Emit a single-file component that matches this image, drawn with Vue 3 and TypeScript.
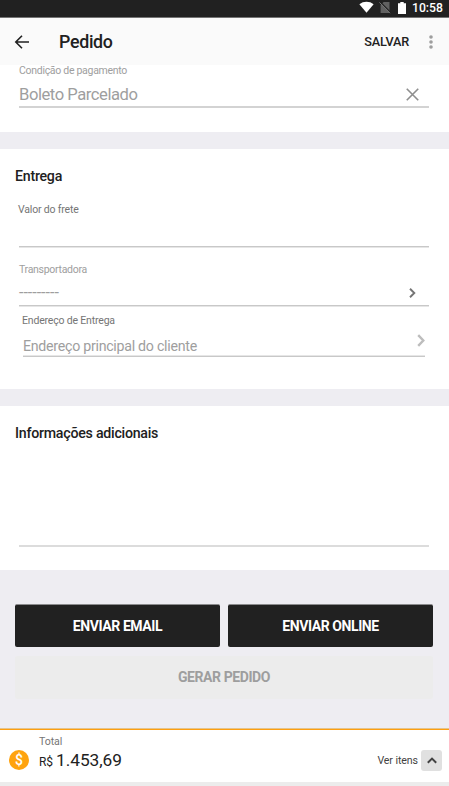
<script setup lang="ts">
import { ref } from 'vue'

interface Order {
  payment: string
  freight: string
  carrier: string
  address: string
  notes: string
  total: string
}

const order = ref<Order>({
  payment: 'Boleto Parcelado',
  freight: '',
  carrier: '---------',
  address: 'Endereço principal do cliente',
  notes: '',
  total: '1.453,69',
})

const sendActions: string[] = ['Enviar email', 'Enviar online']
</script>

<template>
  <main class="screen">
    <div class="status">
      <svg class="wifi" viewBox="0 0 16 12"><path d="M0.4 3.1C4.8-.4 11.2-.4 15.6 3.1L8 12Z" fill="#fff" /></svg>
      <svg class="sim" viewBox="0 0 12 13">
        <path d="M4.6 1H10.5V12H1.6V4Z" fill="#616161" />
        <path d="M1.2 .8L11.8 11.6" stroke="#212121" stroke-width="1.2" />
        <path d="M.4 1.4L11 12.2" stroke="#757575" stroke-width="1" />
      </svg>
      <svg class="battery" viewBox="0 0 8 12"><path d="M2.3 0H5.7V1.2H8V12H0V1.2H2.3Z" fill="#fff" /></svg>
      <span class="clock">10:58</span>
    </div>

    <header class="bar">
      <svg class="back" viewBox="0 0 16 16"><path d="M15 8H2M8 1.8L1.8 8L8 14.2" fill="none" stroke="#212121" stroke-width="1.6" /></svg>
      <h1>Pedido</h1>
      <span class="save">SALVAR</span>
      <svg class="more" viewBox="0 0 4 14"><circle cx="2" cy="2" r="1.8" /><circle cx="2" cy="7" r="1.8" /><circle cx="2" cy="12" r="1.8" /></svg>
    </header>

    <section class="card payment">
      <div class="field">
        <label class="light">Condição de pagamento</label>
        <div class="value">
          <span>{{ order.payment }}</span>
          <svg class="close" viewBox="0 0 12 12"><path d="M.7.7L11.3 11.3M11.3.7L.7 11.3" fill="none" stroke="#8e8e8e" stroke-width="1.5" /></svg>
        </div>
      </div>
    </section>

    <section class="card delivery">
      <h2>Entrega</h2>
      <div class="field freight">
        <label>Valor do frete</label>
        <div class="value">{{ order.freight }}</div>
      </div>
      <div class="field carrier">
        <label class="light">Transportadora</label>
        <div class="value">
          <span>{{ order.carrier }}</span>
          <svg class="chevron" viewBox="0 0 7 10"><path d="M1 .8L5.3 5L1 9.2" fill="none" stroke="#757575" stroke-width="1.9" /></svg>
        </div>
      </div>
      <div class="field address">
        <label>Endereço de Entrega</label>
        <div class="value">
          <span>{{ order.address }}</span>
          <svg class="chevron-lg" viewBox="0 0 8 13"><path d="M1.2 1.1L6.3 6.5L1.2 11.9" fill="none" stroke="#bdbdbd" stroke-width="2.4" /></svg>
        </div>
      </div>
    </section>

    <section class="card extra">
      <h2>Informações adicionais</h2>
      <div class="notes">{{ order.notes }}</div>
    </section>

    <div class="actions">
      <button v-for="action in sendActions" :key="action" type="button">{{ action }}</button>
      <button class="wide" type="button" disabled>Gerar pedido</button>
    </div>

    <footer class="total">
      <div class="coin">$</div>
      <div class="sum">
        <span class="caption">Total</span>
        <div class="amount"><small>R$</small><span>{{ order.total }}</span></div>
      </div>
      <div class="items">
        <span>Ver itens</span>
        <div class="toggle">
          <svg viewBox="0 0 10 7"><path d="M.8 5.8L5 1.6L9.2 5.8" fill="none" stroke="#424242" stroke-width="2" /></svg>
        </div>
      </div>
    </footer>
  </main>
</template>

<style>
body {
  background: #ececec;
}
</style>

<style scoped>
.screen {
  box-sizing: border-box;
  height: 786px;
  display: flex;
  flex-direction: column;
  overflow: hidden;
  background: #eeedf2;
  border-bottom: 4px solid #ececec;
  color: #212121;
  font-family: Roboto, sans-serif;
}
svg {
  display: block;
  flex: none;
}
h1,
h2 {
  margin: 0;
  font-weight: 500;
}
.status {
  box-sizing: border-box;
  height: 18px;
  flex: none;
  display: flex;
  align-items: flex-start;
  padding: 1px 6px 0 359px;
  background: #212121;
  border-bottom: 1px solid #747474;
}
.wifi {
  width: 15px;
  height: 12px;
}
.sim {
  width: 12px;
  height: 13px;
  margin-left: 5px;
}
.battery {
  width: 8px;
  height: 12px;
  margin: 1px 0 0 7px;
}
.clock {
  margin-left: 6px;
  color: #fff;
  font-size: 12.2px;
  font-weight: 500;
  line-height: 14px;
}
.bar {
  height: 47px;
  flex: none;
  display: flex;
  align-items: center;
  padding: 0 16px 0 14px;
  background: #fafafa;
}
.back {
  width: 16px;
  height: 16px;
}
h1 {
  margin-left: 29px;
  font-size: 17.8px;
  letter-spacing: -0.3px;
  line-height: 24px;
}
.save {
  margin-left: auto;
  font-size: 12.7px;
  font-weight: 500;
  letter-spacing: -0.2px;
}
.more {
  width: 4px;
  height: 14px;
  margin-left: 20px;
  fill: #9e9e9e;
}
.card {
  box-sizing: border-box;
  flex: none;
  background: #fff;
}
.payment {
  height: 67px;
  padding: 1px 20px 0 19px;
}
.delivery {
  height: 240px;
  margin-top: 17px;
  padding: 17px 20px 0 19px;
}
.extra {
  height: 164px;
  margin-top: 17px;
  padding: 17px 20px 0 19px;
}
h2 {
  margin-left: -4px;
  font-size: 14.2px;
  letter-spacing: -0.25px;
  line-height: 20px;
}
label {
  display: block;
  margin-left: -1px;
  color: #757575;
  font-size: 10.5px;
  letter-spacing: -0.18px;
  line-height: 10px;
}
label.light {
  margin-left: 0;
  color: #9e9e9e;
  letter-spacing: -0.29px;
}
.value {
  box-sizing: border-box;
  display: flex;
  align-items: center;
  justify-content: space-between;
  border-bottom: 1px solid #c8c8c8;
  box-shadow: 0 1px #e6e6e6;
  color: #9e9e9e;
}
.payment .value {
  height: 32px;
  padding: 7px 10px 0 0;
  border-bottom: 2px solid #d3d3d3;
  box-shadow: none;
  font-size: 16.6px;
  letter-spacing: -0.45px;
  line-height: 24px;
}
.close {
  width: 13px;
  height: 13px;
  margin-top: -1px;
}
.freight {
  padding-top: 19px;
}
.freight .value {
  height: 32px;
}
.carrier {
  padding-top: 18px;
}
.carrier .value {
  height: 31px;
  padding: 6px 13px 0 0;
  font-size: 16px;
  line-height: 20px;
}
.chevron {
  width: 7px;
  height: 10px;
}
.address {
  padding: 10px 4px 0;
}
.address .value {
  height: 31px;
  padding-top: 9px;
  box-shadow: inset 0 -1px #e6e6e6;
  font-size: 14.2px;
  letter-spacing: -0.27px;
  line-height: 20px;
}
.chevron-lg {
  width: 8px;
  height: 13px;
  margin-top: -11px;
}
.notes {
  height: 102px;
  border-bottom: 2px solid #dcdcdc;
}
.actions {
  flex: 1;
  display: grid;
  grid-template-columns: 1fr 1fr;
  grid-auto-rows: 43px;
  gap: 9px 8px;
  padding: 34px 16px 0 15px;
}
button {
  padding: 0;
  border: 0;
  border-top: 1px solid #8b8b8d;
  border-radius: 2px;
  background: #212121;
  color: #fff;
  font: 700 14px Roboto, sans-serif;
  letter-spacing: -0.42px;
  text-transform: uppercase;
}
button:disabled {
  padding-bottom: 2px;
  background: #ececec;
  border-color: #ececec;
  color: #9e9e9e;
}
.wide {
  grid-column: span 2;
}
.total {
  box-sizing: border-box;
  height: 54px;
  flex: none;
  display: flex;
  align-items: flex-start;
  padding: 0 8px 0 9px;
  background: #fff;
  border-top: 1px solid #e3c48f;
  box-shadow: inset 0 1px #ff9f0e;
}
.coin {
  width: 20px;
  height: 20px;
  margin-top: 21px;
  border-radius: 50%;
  background: #ffa30f;
  color: #fff;
  font-size: 14px;
  font-weight: 500;
  line-height: 20px;
  text-align: center;
}
.sum {
  margin-left: 10px;
  padding-top: 7px;
}
.caption {
  display: block;
  color: #757575;
  font-size: 10.6px;
  letter-spacing: -0.1px;
  line-height: 11px;
}
.amount {
  display: flex;
  align-items: baseline;
  gap: 3px;
  font-size: 17.3px;
  letter-spacing: -0.05px;
  line-height: 26px;
}
.amount small {
  font-size: 12px;
}
.items {
  display: flex;
  align-items: center;
  gap: 3px;
  margin: 21px -1px 0 auto;
  color: #424242;
  font-size: 10.6px;
  letter-spacing: -0.08px;
}
.toggle {
  width: 21px;
  height: 21px;
  display: grid;
  place-items: center;
  border-radius: 3px;
  background: #e0e0e0;
}
.toggle svg {
  width: 10px;
  height: 7px;
}
</style>
